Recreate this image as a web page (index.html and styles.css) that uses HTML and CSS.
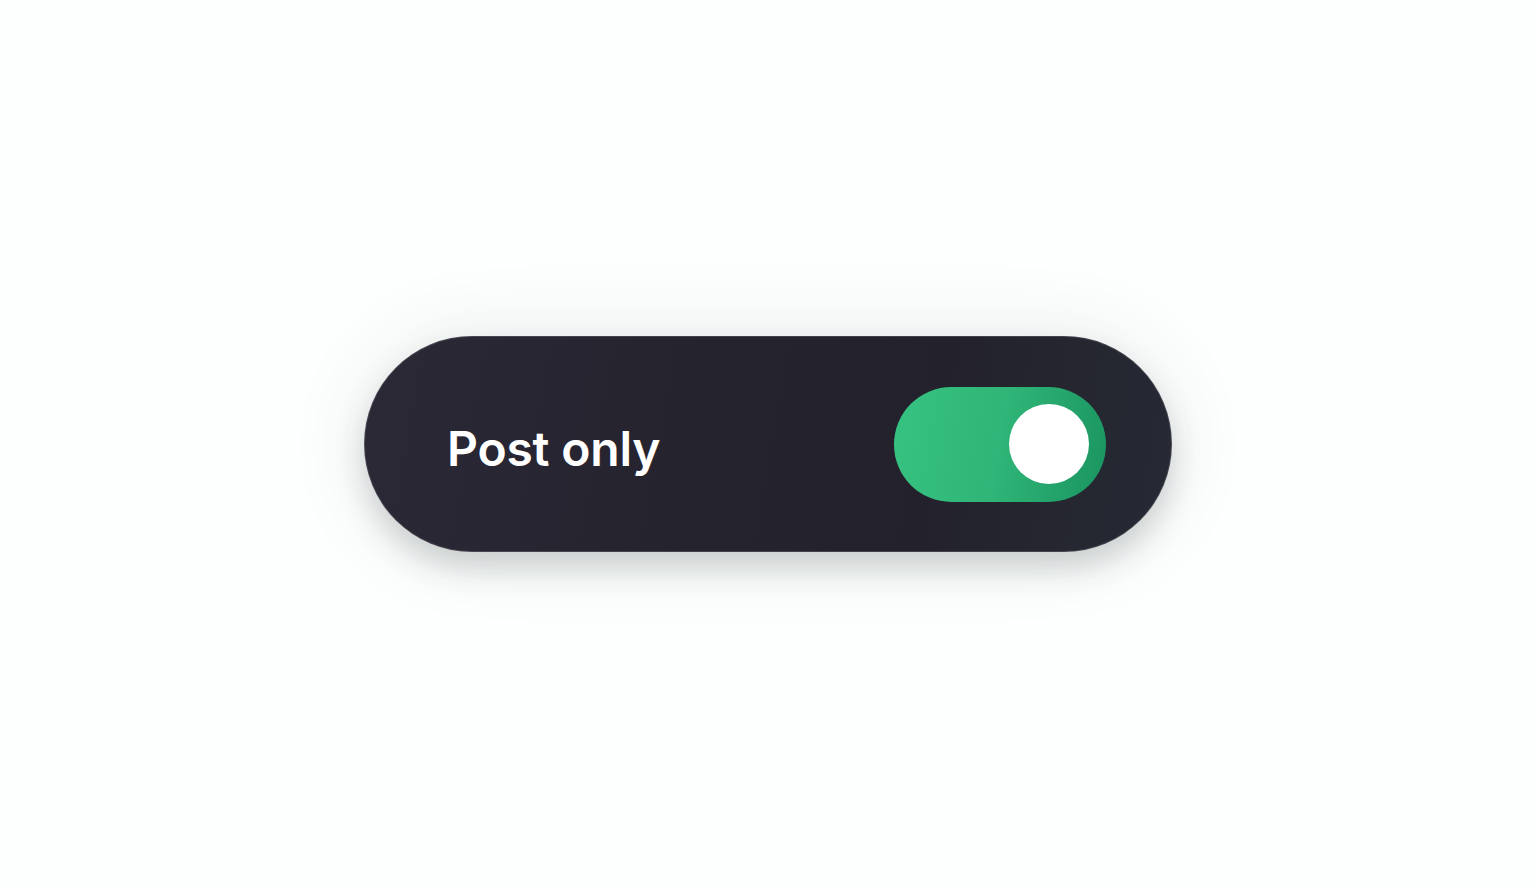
FILE: index.html
```html
<!DOCTYPE html>
<html lang="en">
<head>
  <meta charset="UTF-8" />
  <meta name="viewport" content="width=device-width, initial-scale=1.0" />
  <title>Post only</title>
  <link rel="stylesheet" href="styles.css">
</head>
<body>
  <div class="stage">
    <label class="option-pill">
      <span class="option-label">Post only</span>
      <span class="switch is-on" role="switch" aria-checked="true">
        <span class="switch-knob"></span>
      </span>
    </label>
  </div>
</body>
</html>
```

FILE: styles.css
```css
body {
  margin: 0;
  font-family: Inter, 'Noto Sans', 'Liberation Sans', sans-serif;
  background-color: #fdfefe;
}
.stage {
  height: 100vh;
  display: flex;
  justify-content: center;
  align-items: center;
}
.option-pill {
  box-sizing: border-box;
  width: 808px;
  height: 216px;
  padding: 0 65px 0 82px;
  display: flex;
  justify-content: space-between;
  align-items: center;
  border-radius: 108px;
  border: 1.5px solid rgba(255, 255, 255, 0.14);
  background: linear-gradient(100deg, #2c2937 0%, #25232e 40%, #23222c 70%, #262a34 100%);
  box-shadow: 0 16px 30px rgba(40, 48, 52, 0.2), 0 0 80px rgba(60, 100, 85, 0.1);
  cursor: pointer;
}
.option-label {
  color: #fff;
  font-size: 48px;
  font-weight: 600;
  letter-spacing: -0.2px;
  padding-top: 8px;
}
.switch {
  box-sizing: border-box;
  width: 212px;
  height: 115px;
  padding: 0 17px;
  display: flex;
  align-items: center;
  border-radius: 58px;
  background: linear-gradient(100deg, #37c382 0%, #2fb577 50%, #1a9460 100%);
}
.switch.is-on {
  justify-content: flex-end;
}
.switch-knob {
  width: 80px;
  height: 80px;
  border-radius: 50%;
  background-color: #fff;
}
```
